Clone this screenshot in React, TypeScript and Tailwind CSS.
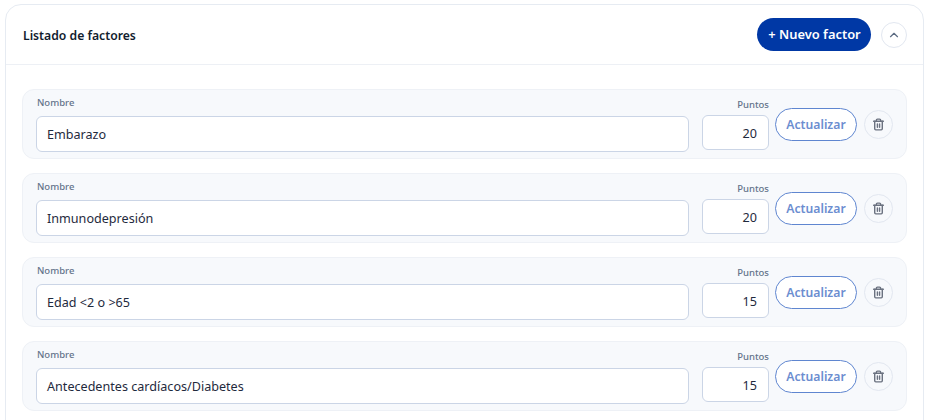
import { ChevronUp, Trash2 } from 'lucide-react';

const factors = [
  { name: 'Embarazo', points: 20 },
  { name: 'Inmunodepresión', points: 20 },
  { name: 'Edad <2 o >65', points: 15 },
  { name: 'Antecedentes cardíacos/Diabetes', points: 15 },
];

function FactorRow({ name, points }: { name: string; points: number }) {
  return (
    <div className="flex h-[70px] shrink-0 items-center rounded-[12px] border border-[#eef1f6] bg-[#f7f9fc] pl-[13px] pr-[13px]">
      <div className="flex flex-1 flex-col">
        <label className="mb-[8px] pl-px text-[9.5px] leading-[11px] font-medium text-[#64748b]">Nombre</label>
        <div className="flex h-[36px] items-center rounded-[6px] border border-[#cbd5e6] bg-white pl-[10px] pt-[3px] text-[12.6px] text-[#1f2a3d]">
          {name}
        </div>
      </div>
      <div className="ml-[13px] flex w-[67px] flex-col">
        <label className="mb-[4px] text-right text-[9.5px] leading-[13px] font-medium text-[#64748b]">Puntos</label>
        <div className="flex h-[35px] items-center justify-end rounded-[6px] border border-[#cbd5e6] bg-white pr-[11px] pt-[3px] text-[12.6px] text-[#1f2a3d]">
          {points}
        </div>
      </div>
      <button type="button" className="ml-[6px] flex h-[33px] w-[82px] items-center justify-center rounded-full border border-[#5f86d0] bg-white pt-[2px] text-[12.2px] font-semibold text-[#6b8dd0]">
        Actualizar
      </button>
      <button type="button" className="ml-[7px] flex h-[29px] w-[29px] items-center justify-center rounded-full border border-[#e2e7f0] bg-[#f7f9fc] text-[#6b7280]">
        <Trash2 className="h-[13px] w-[13px]" strokeWidth={2.6} />
      </button>
    </div>
  );
}

export default function App() {
  return (
    <div className="h-[420px] w-[926px] overflow-hidden bg-white pl-[5px] pr-[2px] pt-[4px] font-['Noto_Sans',sans-serif]">
      <div className="rounded-[16px] border border-[#e6ebf2] bg-white">
        <div className="flex h-[60px] items-center border-b border-[#edf0f5] pl-[17px] pr-[16px]">
          <h2 className="flex-1 pt-[3px] text-[12.2px] font-semibold text-[#111c2e]">Listado de factores</h2>
          <button type="button" className="flex h-[33px] w-[114px] items-center justify-center rounded-full bg-[#0038a5] pl-px pt-px text-[12.9px] font-semibold text-white">
            + Nuevo factor
          </button>
          <button type="button" className="ml-[10px] flex h-[26px] w-[26px] items-center justify-center rounded-full border border-[#e2e7f0] bg-white text-[#5b6b82]">
            <ChevronUp className="h-[14px] w-[14px]" strokeWidth={2} />
          </button>
        </div>
        <div className="flex h-[400px] flex-col gap-[14px] pl-[16px] pr-[16px] pt-[24px]">
          {factors.map((f) => (
            <FactorRow key={f.name} name={f.name} points={f.points} />
          ))}
        </div>
      </div>
    </div>
  );
}
